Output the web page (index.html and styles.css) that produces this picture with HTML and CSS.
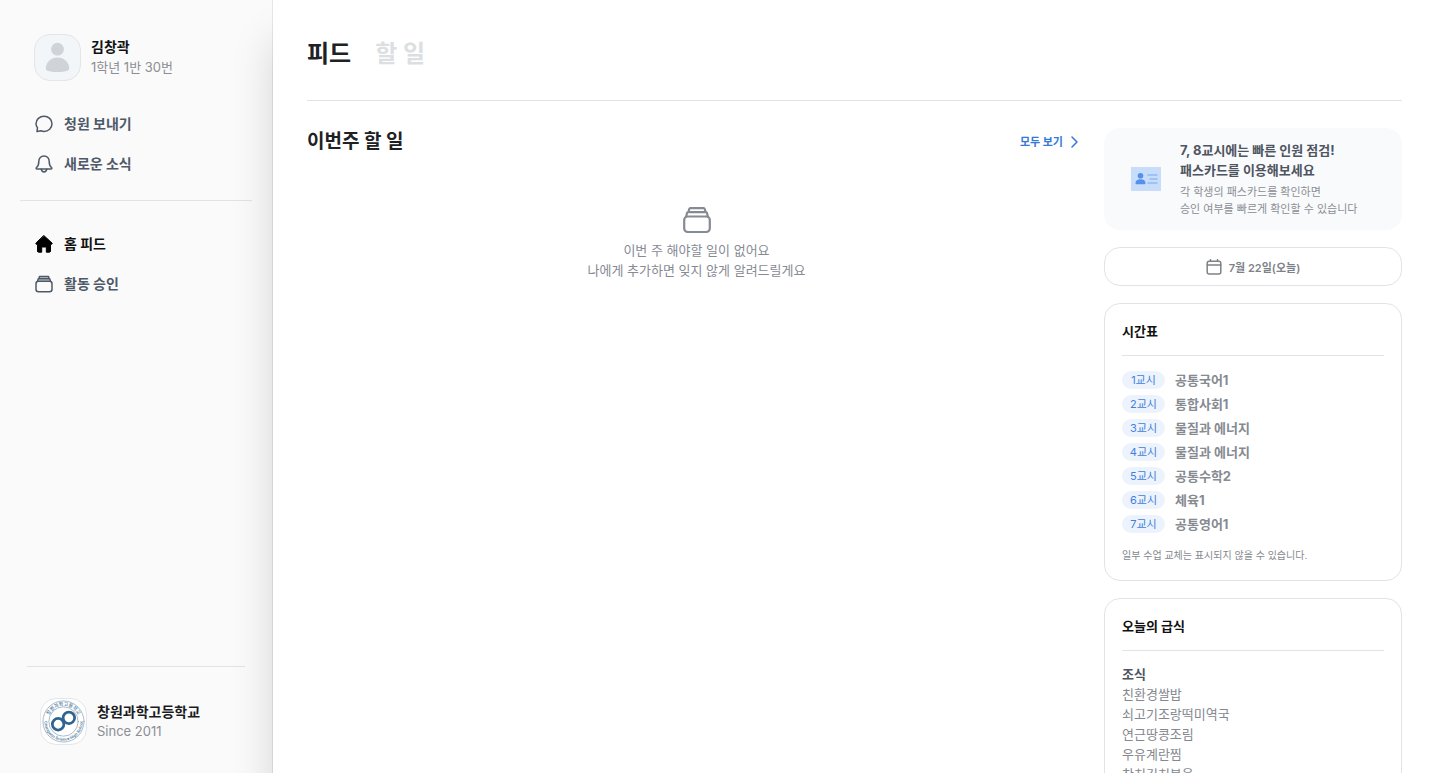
FILE: index.html
```html
<!DOCTYPE html>
<html lang="ko">
<head>
    <meta charset="UTF-8">
    <meta name="viewport" content="width=device-width, initial-scale=1.0">
    <title>홈 피드</title>
    <link rel="stylesheet" href="styles.css">
</head>
<body>
    <!-- Sidebar -->
    <aside class="sidebar">
        <div class="profile">
            <svg class="avatar" viewBox="0 0 46 46" aria-hidden="true">
                <circle cx="23" cy="14.500" r="6.500"/>
                <path d="M11 34.500C11 28 16 23 23 23s12 5 12 11.500c0 2-4 3.300-12 3.300s-12-1.300-12-3.300z"/>
            </svg>
            <div>
                <div class="profile-name">김창곽</div>
                <div class="profile-info">1학년 1반 30번</div>
            </div>
        </div>

        <nav class="menu">
            <a href="#">
                <svg viewBox="0 0 18 18"><path d="M2 16.600l.5-3.900C1.500 11.600 1 10.300 1 8.800 1 4.500 4.600 1.200 9 1.200s8 3.300 8 7.600-3.600 7.600-8 7.600c-1.100 0-2.100-.2-3-.6z"/></svg>
                청원 보내기
            </a>
            <a href="#">
                <svg viewBox="0 0 18 18"><path d="M9 1C5.900 1 3.800 3.200 3.800 6.400c0 3.300-.9 5-2.300 6.100-.6.5-.4 1.500.5 1.500h14c.9 0 1.100-1 .5-1.500-1.400-1.100-2.300-2.800-2.300-6.100C14.200 3.200 12.100 1 9 1z"/><path d="M6.300 14.200c.2 1.700 1.200 2.800 2.700 2.800s2.500-1.100 2.700-2.800"/></svg>
                새로운 소식
            </a>
        </nav>

        <nav class="menu menu-main">
            <a href="#" class="active">
                <svg viewBox="0 0 18 18"><path class="home" d="M9 .7l8 7.300c.5.5.2 1.300-.5 1.300h-1v6.700c0 .8-.4 1.200-1.200 1.200h-3v-4.400c0-.5-.3-.8-.8-.8h-3c-.5 0-.8.3-.8.8v4.400h-3c-.8 0-1.200-.4-1.200-1.200V9.300h-1C.8 9.300.5 8.500 1 8z"/></svg>
                홈 피드
            </a>
            <a href="#">
                <svg viewBox="0 0 18 18"><path class="tint" d="M2.800 6L4.500 1.500h9L15.200 6z"/><rect x="1" y="6.300" width="16" height="10.400" rx="2.500"/><path d="M2.500 6.300l.8-2.500h11.400l.8 2.500M4 3.800l.5-2.300h9l.5 2.300"/></svg>
                활동 승인
            </a>
        </nav>

        <footer class="school">
            <svg class="school-logo" viewBox="0 0 46 46" aria-hidden="true">
                <defs>
                    <path id="arc-top" d="M7 23a16 16 0 0 1 32 0"/>
                    <path id="arc-bottom" d="M5.900 13.100A19.700 19.700 0 1 0 40.100 13.100"/>
                </defs>
                <circle cx="23" cy="23" r="21"/>
                <circle cx="23" cy="23" r="15"/>
                <text class="logo-ko"><textPath href="#arc-top" startOffset="50%" text-anchor="middle">창원과학고등학교</textPath></text>
                <text class="logo-en"><textPath href="#arc-bottom" startOffset="50%" text-anchor="middle">Changwon Science High School</textPath></text>
                <g class="logo-rings">
                    <circle cx="17.500" cy="25.800" r="5.900"/>
                    <circle cx="28.500" cy="19.200" r="5.900"/>
                </g>
            </svg>
            <div>
                <div class="school-name">창원과학고등학교</div>
                <div class="school-since">Since 2011</div>
            </div>
        </footer>
    </aside>

    <main class="content">
        <header class="tabs">
            <button type="button" class="tab selected">피드</button>
            <button type="button" class="tab">할 일</button>
        </header>

        <div class="columns">
            <section class="feed">
                <div class="feed-head">
                    <h2>이번주 할 일</h2>
                    <a href="#" class="more">
                        모두 보기
                        <svg viewBox="0 0 12 12"><path d="M4 1l5 5-5 5"/></svg>
                    </a>
                </div>
                <div class="empty">
                    <svg viewBox="0 0 28 28"><rect x="1.200" y="10.500" width="25.600" height="15.500" rx="3.500"/><path d="M3.200 10.500l.8-3.400c.2-.6.5-.9 1.100-.9h17.800c.6 0 .9.300 1.100.9l.8 3.400M5.500 6l.7-2.900c.2-.6.6-.9 1.200-.9h13.200c.6 0 1 .3 1.200.9l.7 2.900"/></svg>
                    <p>이번 주 해야할 일이 없어요<br>나에게 추가하면 잊지 않게 알려드릴게요</p>
                </div>
            </section>

            <aside class="widgets">
                <a href="#" class="promo">
                    <svg viewBox="0 0 30 24" aria-hidden="true">
                        <rect class="card-bg" width="30" height="24"/>
                        <circle class="card-person" cx="9.500" cy="8.700" r="2.800"/>
                        <path class="card-person" d="M4.500 16.300c0-2.500 2-4 5-4s5 1.500 5 4c0 .6-.4.9-1 .9h-8c-.6 0-1-.3-1-.9z"/>
                        <path class="card-lines" d="M17 8h9M19 12h7M17 16h9"/>
                    </svg>
                    <div>
                        <div class="promo-title">7, 8교시에는 빠른 인원 점검!<br>패스카드를 이용해보세요</div>
                        <div class="promo-text">각 학생의 패스카드를 확인하면<br>승인 여부를 빠르게 확인할 수 있습니다</div>
                    </div>
                </a>

                <button type="button" class="date">
                    <svg viewBox="0 0 16 16"><rect x="1.200" y="2.300" width="13.600" height="12.700" rx="2"/><path d="M1.200 6h13.600M4.500.7v1.600M11.500.7v1.600"/></svg>
                    7월 22일(오늘)
                </button>

                <!-- Timetable -->
                <section class="card">
                    <h3>시간표</h3>
                    <ul class="timetable">
                        <li><span class="period">1교시</span>공통국어1</li>
                        <li><span class="period">2교시</span>통합사회1</li>
                        <li><span class="period">3교시</span>물질과 에너지</li>
                        <li><span class="period">4교시</span>물질과 에너지</li>
                        <li><span class="period">5교시</span>공통수학2</li>
                        <li><span class="period">6교시</span>체육1</li>
                        <li><span class="period">7교시</span>공통영어1</li>
                    </ul>
                    <p class="note">일부 수업 교체는 표시되지 않을 수 있습니다.</p>
                </section>

                <!-- Meals -->
                <section class="card">
                    <h3>오늘의 급식</h3>
                    <h4>조식</h4>
                    <ul class="meal">
                        <li>친환경쌀밥</li>
                        <li>쇠고기조랑떡미역국</li>
                        <li>연근땅콩조림</li>
                        <li>우유계란찜</li>
                        <li>참치김치볶음</li>
                    </ul>
                </section>
            </aside>
        </div>
    </main>
</body>
</html>
```

FILE: styles.css
```css
* {
    box-sizing: border-box;
}
body {
    margin: 0;
    display: flex;
    height: 100vh;
    overflow: hidden;
    background-color: #fff;
    color: #202124;
    font-family: Inter, "Noto Sans CJK KR", sans-serif;
    font-size: 13px;
    line-height: 20px;
}
h2, h3, h4, p, ul {
    margin: 0;
    padding: 0;
}
ul {
    list-style: none;
}
a {
    color: inherit;
    text-decoration: none;
}
button {
    padding: 0;
    border: none;
    background: none;
    font-family: inherit;
    cursor: pointer;
}
svg {
    flex-shrink: 0;
    fill: none;
    stroke: currentColor;
    stroke-linecap: round;
    stroke-linejoin: round;
}

/* Sidebar */
.sidebar {
    display: flex;
    flex-direction: column;
    flex: 0 0 273px;
    padding: 34px 20px 28px;
    border-right: 1px solid #e6e7e8;
    background-color: #fafafa;
}
.profile {
    display: flex;
    align-items: center;
    gap: 10px;
    padding-left: 14px;
}
.avatar {
    width: 47px;
    height: 47px;
    border: 1px solid #e3e6e8;
    border-radius: 16px;
    background-color: #f3f6f8;
    fill: #d0d4d8;
    stroke: none;
}
.profile-name {
    font-size: 14px;
    font-weight: 700;
    color: #111;
}
.profile-info {
    padding-bottom: 2px;
    color: #8b8e94;
}
.menu {
    padding: 23px 14px 16px;
    border-bottom: 1px solid #e2e3e5;
}
.menu-main {
    border-bottom: none;
}
.menu a {
    display: flex;
    align-items: center;
    gap: 11px;
    height: 40px;
    padding-left: 1px;
    font-size: 14px;
    font-weight: 700;
    color: #4e5968;
}
.menu svg {
    width: 18px;
    height: 18px;
    stroke-width: 1.5;
}
.menu .active {
    color: #111;
}
.home {
    fill: #000;
    stroke: #000;
    stroke-width: 1;
}
.tint {
    fill: #c5cad1;
    stroke: none;
}
.school {
    display: flex;
    align-items: center;
    gap: 10px;
    margin: auto 7px 0;
    padding: 31px 13px 0;
    border-top: 1px solid #e2e3e5;
}
.school-logo {
    width: 47px;
    height: 47px;
    border: 1px solid #e3e6e8;
    border-radius: 16px;
    background-color: #fff;
    stroke: #7e9cb5;
    stroke-width: 0.7;
}
.school-logo text {
    fill: #4d7898;
    stroke: none;
}
.logo-ko {
    font-size: 5px;
    font-weight: 500;
}
.logo-en {
    font-size: 4px;
    font-weight: 600;
}
.logo-rings {
    stroke: #2f6492;
    stroke-width: 2.8;
}
.school-name {
    font-size: 14px;
    font-weight: 700;
    color: #1b1c1f;
}
.school-since {
    padding-bottom: 2px;
    line-height: 18px;
    color: #8b8e94;
}

/* Main content */
.content {
    flex: 1;
    min-width: 0;
    padding: 0 34px;
    background-color: #fff;
    box-shadow: 0 40px 40px rgba(0, 0, 0, 0.15);
    overflow: hidden;
}
.tabs {
    display: flex;
    align-items: center;
    gap: 24px;
    padding: 36px 0 28px;
    border-bottom: 1px solid #e2e3e5;
}
.tab {
    font-size: 24px;
    font-weight: 700;
    line-height: 36px;
    color: #dcdfe2;
}
.tab.selected {
    color: #202124;
}
.columns {
    display: flex;
    gap: 18px;
    padding-top: 27px;
}
.feed {
    flex: 1;
    min-width: 0;
}
.feed-head {
    display: flex;
    align-items: center;
    justify-content: space-between;
    padding-right: 6px;
}
.feed-head h2 {
    font-size: 19px;
    font-weight: 700;
    line-height: 28px;
}
.more {
    display: flex;
    align-items: center;
    gap: 5px;
    font-size: 11px;
    font-weight: 700;
    color: #3478d8;
}
.more svg {
    width: 12px;
    height: 12px;
    stroke-width: 1.5;
}
.empty {
    display: flex;
    flex-direction: column;
    align-items: center;
    gap: 6px;
    padding-top: 50px;
    text-align: center;
    color: #868a93;
}
.empty svg {
    width: 28px;
    height: 28px;
    stroke-width: 2.2;
}

/* Right column */
.widgets {
    display: flex;
    flex-direction: column;
    gap: 17px;
    flex: 0 0 298px;
}
.promo {
    display: flex;
    align-items: center;
    gap: 19px;
    padding: 12px 27px;
    border-radius: 16px;
    background-color: #f9fafc;
}
.promo svg {
    width: 30px;
    height: 24px;
    stroke: none;
}
.card-bg {
    fill: #c8ddf9;
}
.card-person {
    fill: #5590ea;
}
.promo .card-lines {
    stroke: #8fb9f3;
    stroke-width: 1.4;
}
.promo-title {
    font-weight: 700;
    color: #4e5460;
}
.promo-text {
    padding-top: 4px;
    font-size: 11px;
    line-height: 17px;
    color: #8b8e94;
}
.date {
    display: flex;
    align-items: center;
    justify-content: center;
    gap: 7px;
    height: 39px;
    border: 1px solid #e2e3e5;
    border-radius: 16px;
    font-size: 11px;
    font-weight: 600;
    color: #7d8289;
}
.date svg {
    width: 16px;
    height: 16px;
    stroke-width: 1.5;
}
.card {
    padding: 17px;
    border: 1px solid #e2e3e5;
    border-radius: 16px;
}
.card h3 {
    margin-bottom: 12px;
    padding-bottom: 14px;
    border-bottom: 1px solid #e2e3e5;
    font-size: 13px;
    font-weight: 700;
    color: #111;
}
.timetable li {
    display: flex;
    align-items: center;
    gap: 10px;
    height: 24px;
    font-weight: 700;
    color: #868a91;
}
.period {
    width: 43px;
    border-radius: 9px;
    background-color: #edf3fd;
    font-size: 11px;
    font-weight: 400;
    line-height: 18px;
    text-align: center;
    color: #3f7fdc;
}
.note {
    padding-top: 11px;
    font-size: 10px;
    line-height: 16px;
    color: #85888e;
}
.card h4 {
    padding-top: 1px;
    font-size: 13px;
    font-weight: 700;
    color: #4e5460;
}
.meal {
    color: #85888e;
}
```
